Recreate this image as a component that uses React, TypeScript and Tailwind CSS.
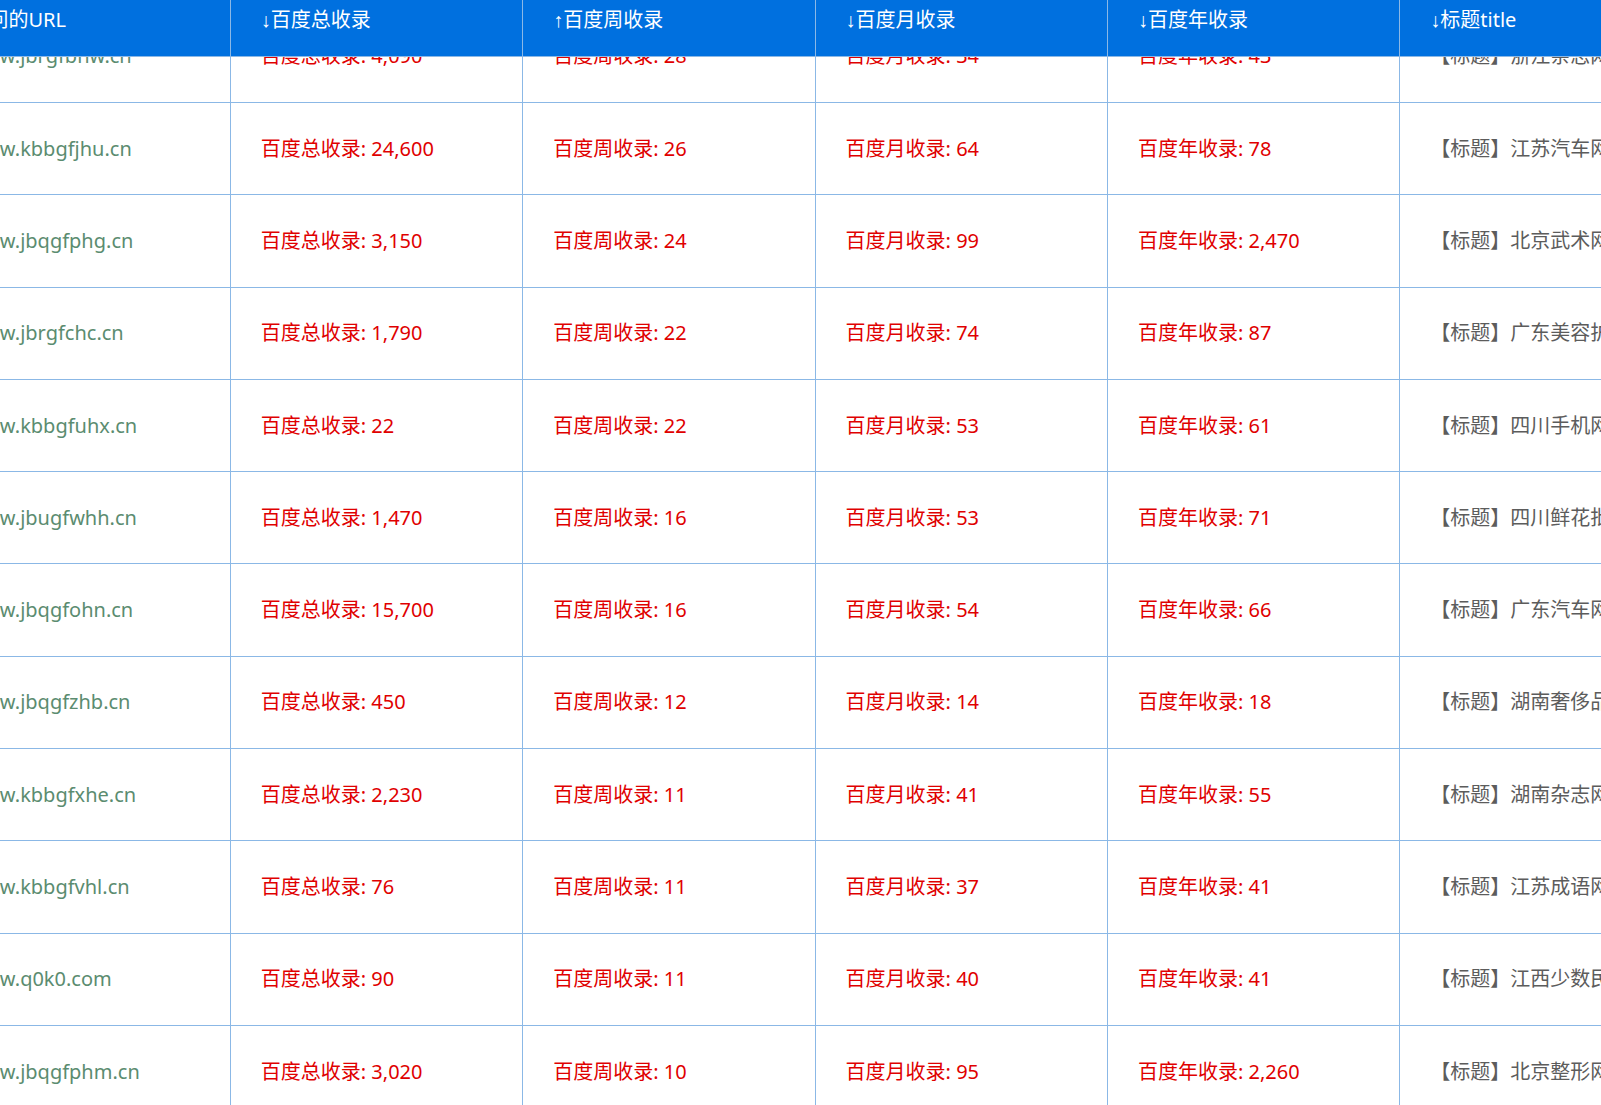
import React from 'react';

type Row = {
  url: string;
  total: string;
  week: string;
  month: string;
  year: string;
  title: string;
};

const rows: Row[] = [
  { url: 'www.jbrgfbhw.cn', total: '4,090', week: '28', month: '34', year: '43', title: '浙江亲志网' },
  { url: 'www.kbbgfjhu.cn', total: '24,600', week: '26', month: '64', year: '78', title: '江苏汽车网' },
  { url: 'www.jbqgfphg.cn', total: '3,150', week: '24', month: '99', year: '2,470', title: '北京武术网' },
  { url: 'www.jbrgfchc.cn', total: '1,790', week: '22', month: '74', year: '87', title: '广东美容护肤网' },
  { url: 'www.kbbgfuhx.cn', total: '22', week: '22', month: '53', year: '61', title: '四川手机网' },
  { url: 'www.jbugfwhh.cn', total: '1,470', week: '16', month: '53', year: '71', title: '四川鲜花批发网' },
  { url: 'www.jbqgfohn.cn', total: '15,700', week: '16', month: '54', year: '66', title: '广东汽车网' },
  { url: 'www.jbqgfzhb.cn', total: '450', week: '12', month: '14', year: '18', title: '湖南奢侈品网' },
  { url: 'www.kbbgfxhe.cn', total: '2,230', week: '11', month: '41', year: '55', title: '湖南杂志网' },
  { url: 'www.kbbgfvhl.cn', total: '76', week: '11', month: '37', year: '41', title: '江苏成语网' },
  { url: 'www.q0k0.com', total: '90', week: '11', month: '40', year: '41', title: '江西少数民族网' },
  { url: 'www.jbqgfphm.cn', total: '3,020', week: '10', month: '95', year: '2,260', title: '北京整形网' },
];

const headers: { arrow: string; label: string }[] = [
  { arrow: '', label: '访问的URL' },
  { arrow: '↓', label: '百度总收录' },
  { arrow: '↑', label: '百度周收录' },
  { arrow: '↓', label: '百度月收录' },
  { arrow: '↓', label: '百度年收录' },
  { arrow: '↓', label: '标题title' },
];

const Cell: React.FC<{ children: React.ReactNode; className?: string }> = ({ children, className }) => (
  <div
    className={
      'w-[292.4px] shrink-0 flex items-center pl-[30px] border-r border-[#8bb8e6] whitespace-nowrap overflow-hidden ' +
      (className ?? '')
    }
  >
    {children}
  </div>
);

export default function App() {
  return (
    <div
      className="w-[1601px] h-[1105px] overflow-hidden bg-white text-[20px]"
      style={{ fontFamily: '"Noto Sans", "Noto Sans CJK SC", sans-serif' }}
    >
      {/* table scrolled horizontally: first column partly off-screen */}
      <div className="-ml-[61.6px] w-[1755px]">
        {/* sticky header */}
        <div className="relative z-10 flex h-[57px] bg-[#0070df] border-b border-[#8bb8e6] text-white">
          {headers.map((h) => (
            <div
              key={h.label}
              className="w-[292.4px] shrink-0 pl-[30px] pt-[7px] leading-[26px] border-r border-[#8bb8e6] whitespace-nowrap"
            >
              {h.arrow && <span style={{ fontFamily: '"Liberation Sans", sans-serif' }}>{h.arrow}</span>}
              {h.label}
            </div>
          ))}
        </div>

        {/* body, first row slides under the header */}
        <div className="-mt-[46.3px]">
          {rows.map((r) => (
            <div key={r.url} className="flex h-[92.3px] border-b border-[#8bb8e6]">
              <Cell className="text-[#5b8c70]">{r.url}</Cell>
              <Cell className="text-[#e00000]">百度总收录: {r.total}</Cell>
              <Cell className="text-[#e00000]">百度周收录: {r.week}</Cell>
              <Cell className="text-[#e00000]">百度月收录: {r.month}</Cell>
              <Cell className="text-[#e00000]">百度年收录: {r.year}</Cell>
              <Cell className="text-[#5c5c5c]">【标题】{r.title}</Cell>
            </div>
          ))}
        </div>
      </div>
    </div>
  );
}
